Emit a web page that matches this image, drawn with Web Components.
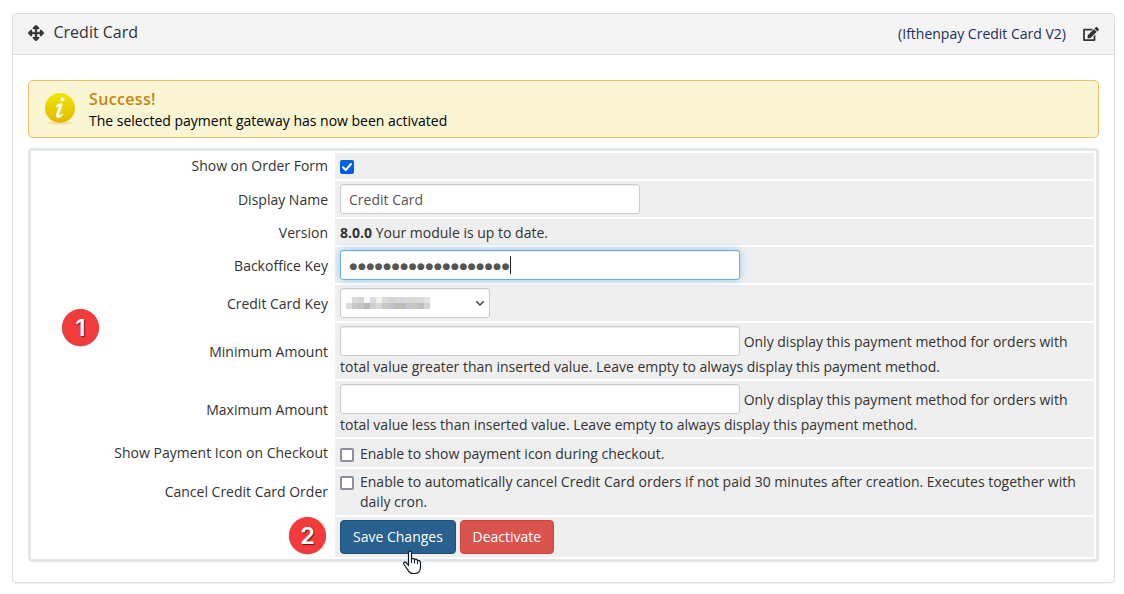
<!DOCTYPE html>
<html lang="en">
<head>
<meta charset="utf-8">
<title>Payment Gateways</title>
<style>
body{margin:0;background:#fff;width:1124px;height:594px;overflow:hidden;font:14px/20px "Open Sans",sans-serif;color:#333}
.low{--label-drop:2px}
</style>
</head>
<body>
<gateway-panel heading="Credit Card" module="(Ifthenpay Credit Card V2)">
  <success-alert heading="Success!">The selected payment gateway has now been activated</success-alert>
  <settings-table>
    <settings-row label="Show on Order Form" style="height:26px"><check-box checked></check-box></settings-row>
    <settings-row class="low" label="Display Name" style="height:36px"><text-field style="width:300px">Credit Card</text-field></settings-row>
    <settings-row class="low" label="Version" style="height:26px;--cell-top:4px"><b>8.0.0</b> Your module is up to date.</settings-row>
    <settings-row class="low" label="Backoffice Key" style="height:36px"><text-field focused>●●●●●●●●●●●●●●●●●●●</text-field></settings-row>
    <settings-row class="low" label="Credit Card Key" style="height:36px"><key-select></key-select></settings-row>
    <settings-row class="low" label="Minimum Amount" style="height:56px"><text-field></text-field> Only display this payment method for orders with total value greater than inserted value. Leave empty to always display this payment method.</settings-row>
    <settings-row class="low" label="Maximum Amount" style="height:56px"><text-field></text-field> Only display this payment method for orders with total value less than inserted value. Leave empty to always display this payment method.</settings-row>
    <settings-row label="Show Payment Icon on Checkout" style="height:28px;--cell-top:5px"><check-box>Enable to show payment icon during checkout.</check-box></settings-row>
    <settings-row label="Cancel Credit Card Order" style="height:46px"><check-box>Enable to automatically cancel Credit Card orders if not paid 30 minutes after creation. Executes together with daily cron.</check-box></settings-row>
    <settings-row label="" style="height:40px"><action-button>Save Changes</action-button> <action-button kind="danger">Deactivate</action-button></settings-row>
  </settings-table>
</gateway-panel>
<step-badge style="left:62px;top:309px">1</step-badge>
<step-badge style="left:289px;top:517px">2</step-badge>
<hand-pointer></hand-pointer>
<script>
function define(name, render){
  customElements.define(name, class extends HTMLElement{
    constructor(){super();this.attachShadow({mode:'open'})}
    connectedCallback(){this.shadowRoot.innerHTML=render(this)}
  });
}
define('gateway-panel', el=>`<style>
:host{display:block;box-sizing:border-box;margin:0 9px 0 12px;height:583px;padding-top:13px}
section{box-sizing:border-box;height:570px;border:1px solid #ddd;border-radius:4px;box-shadow:0 1px 1px rgba(0,0,0,.05)}
header{height:40px;background:#f4f4f4;border-bottom:1px solid #ddd;border-radius:3px 3px 0 0;display:flex;align-items:center;padding:0 15px}
h3{font-size:16px;font-weight:400;line-height:20px;margin:0 auto 4px 9.500px}
.m{color:#202f60;margin-right:17px;margin-bottom:1px}
.mv{margin-bottom:3px}
svg{display:block}
main{padding:25px 15px 0}
</style><section><header>
<svg class="mv" width="16" height="16" viewBox="0 0 512 512" fill="#333" stroke="#333" stroke-width="12"><path d="M352.201 425.775l-79.196 79.196c-9.373 9.373-24.568 9.373-33.941 0l-79.196-79.196c-15.119-15.119-4.411-40.971 16.971-40.970h51.162L228 284H127.196v51.162c0 21.382-25.851 32.090-40.971 16.971L7.029 272.937c-9.373-9.373-9.373-24.569 0-33.941L86.225 159.800c15.119-15.119 40.971-4.411 40.971 16.971V228H228V127.196h-51.230c-21.382 0-32.090-25.851-16.971-40.971l79.196-79.196c9.373-9.373 24.568-9.373 33.941 0l79.196 79.196c15.119 15.119 4.411 40.971-16.971 40.971h-51.162V228h100.804v-51.162c0-21.382 25.851-32.090 40.970-16.971l79.196 79.196c9.373 9.373 9.373 24.569 0 33.941L425.773 352.200c-15.119 15.119-40.971 4.411-40.970-16.971V284H284v100.804h51.230c21.382 0 32.090 25.851 16.971 40.971z"/></svg>
<h3>${el.getAttribute('heading')}</h3><span class="m">${el.getAttribute('module')}</span>
<svg width="16" height="14" viewBox="0 0 576 512" fill="#333"><path d="M402.600 83.200l90.200 90.200c3.800 3.800 3.800 10 0 13.800L274.400 405.600l-92.800 10.300c-12.400 1.400-22.900-9.100-21.500-21.500l10.300-92.800L388.800 83.200c3.800-3.800 10-3.800 13.800 0zm162-22.900l-48.800-48.800c-15.200-15.200-39.900-15.200-55.200 0l-35.400 35.400c-3.800 3.800-3.800 10 0 13.800l90.200 90.200c3.800 3.800 10 3.800 13.800 0l35.400-35.400c15.200-15.300 15.200-40 0-55.200zM384 346.200V448H64V128h229.800c3.200 0 6.200-1.300 8.500-3.500l40-40c7.600-7.600 2.200-20.500-8.500-20.500H48C21.500 64 0 85.500 0 112v352c0 26.500 21.500 48 48 48h352c26.500 0 48-21.500 48-48V306.200c0-10.700-12.900-16-20.500-8.500l-40 40c-2.200 2.300-3.500 5.300-3.500 8.500z"/></svg>
</header><main><slot></slot></main></section>`);
define('success-alert', el=>`<style>
:host{display:flex;box-sizing:border-box;height:58px;border:1px solid #e8c264;border-radius:5px;background:#faf5d3;color:#000;padding:8px 16px 0;margin-bottom:10px}
svg{margin:3px 13px 0 -1px}
strong{display:block;font-size:16px;line-height:20px;font-weight:650;letter-spacing:.35px;color:#c48612}
.b{line-height:22px;padding-top:1px}
</style>
<svg width="32" height="34" viewBox="0 0 32 34"><defs><linearGradient id="g" x2="0" y2="1"><stop offset="0" stop-color="#f0e800"/><stop offset=".5" stop-color="#e8cf00"/><stop offset="1" stop-color="#e2b802"/></linearGradient></defs><ellipse cx="16" cy="31" rx="13" ry="1.700" fill="#ecd9a0" opacity=".7"/><circle cx="16" cy="16" r="15" fill="url(#g)"/><circle cx="18.500" cy="7.500" r="2" fill="#fff"/><path d="M11.800 14.300C14 12.200 16.500 11 17.900 11.600C18.700 12 17.900 14.500 17.100 17C16.300 19.700 14.900 23 15.600 23.500C16.300 24 18 22.600 19 21.600L19.400 22.100C17.500 24.800 14.500 26.500 13 25.500C11.600 24.500 12.500 21.600 13.300 19.300C14 17.300 15.200 14.500 14.700 14.200C14.200 13.900 13 14.600 12.200 15.100Z" fill="#fff" stroke="#fff" stroke-width=".4"/></svg>
<div class="t"><strong>${el.getAttribute('heading')}</strong><div class="b"><slot></slot></div></div>`);
define('settings-table', el=>`<style>
:host{display:flex;flex-direction:column;gap:2px;box-sizing:border-box;height:414px;border:3px solid #e2e7e9;border-radius:4px;padding:2px}
</style><slot></slot>`);
define('settings-row', el=>`<style>
:host{display:grid;grid-template-columns:300px 759px;gap:2px}
.l{display:flex;align-items:center;justify-content:flex-end;padding:var(--label-drop,0) 5px 0 0}
.c{background:#efefef;box-sizing:border-box;padding:var(--cell-top,3px) 5px 0}
</style><div class="l">${el.getAttribute('label')}</div><div class="c"><slot></slot></div>`);
define('text-field', el=>`<style>
:host{display:inline-block;overflow:hidden;vertical-align:-10px;margin-bottom:1px;box-sizing:border-box;width:400px;height:30px;line-height:27px;background:#fff;border:1px solid #ccc;border-radius:3px;padding:1px 8px 0;color:#555;box-shadow:inset 0 1px 1px rgba(0,0,0,.075)}
:host([focused]){padding-left:8.500px;border-color:#66afe9;box-shadow:inset 0 1px 1px rgba(0,0,0,.075),0 0 8px rgba(102,175,233,.6);position:relative}
:host([focused]) span{display:inline-block;vertical-align:top;height:18px;margin-top:4px;font:9px/20px "DejaVu Sans",sans-serif;letter-spacing:.6px;border-right:1px solid #222}
</style><span><slot></slot></span>`);
define('check-box', el=>`<style>
:host{display:flex;gap:6px}
i{flex:none;box-sizing:border-box;width:14px;height:14px;margin-top:4px;border:2px solid #8f8f9d;border-radius:2px;background:#fff}
:host([checked]) i{border:0;background:#0060df}
svg{display:block}
</style><i>${el.hasAttribute('checked')?'<svg width="14" height="14" viewBox="0 0 14 14"><path d="M3 7.300 5.700 10 11 4" fill="none" stroke="#fff" stroke-width="2" stroke-linecap="round" stroke-linejoin="round"/></svg>':''}</i><span><slot></slot></span>`);
define('key-select', el=>{
  const rows=[['#fbfbf9','#dadadd','#d5d3d4','#fafaf7','#d8dbe1','#f4f0ec','#d9dbdd','#d7d4cf','#d7d8d9','#d8d7d8','#d5dad9','#d9d7cf','#dadadb','#e2e3e7'],
  ['#dfdad8','#c7c9cc','#c9c2c0','#b5b7b7','#cdd0cf','#dbd7d8','#c9c7c0','#c2c4cb','#bdbcbc','#bdbbbc','#c3c9ce','#ccc8bf','#bdc0c6','#d5d4d4']];
  return `<style>
:host{display:flex;align-items:center;justify-content:space-between;box-sizing:border-box;width:150px;height:30px;background:#fff;border:1px solid #ccc;border-radius:3px;padding:0 4px 0 5px;box-shadow:inset 0 1px 1px rgba(0,0,0,.075)}
</style><svg width="84" height="12" shape-rendering="crispEdges">${rows.map((r,y)=>r.map((c,x)=>`<rect x="${x*6}" y="${y*6}" width="6" height="6" fill="${c}"/>`).join('')).join('')}</svg>
<svg width="10" height="8" viewBox="0 0 10 8"><path d="M1.300 2.300 5 6 8.700 2.300" fill="none" stroke="#444" stroke-width="1.500"/></svg>`});
define('action-button', el=>`<style>
:host{display:inline-block;vertical-align:top;box-sizing:border-box;height:34px;padding:6px 12px;border:1px solid #204d74;border-radius:4px;background:#286090;color:#fff}
:host([kind=danger]){background:#d9534f;border-color:#d43f3a}
</style><slot></slot>`);
define('step-badge', el=>`<style>
:host{position:absolute;width:37px;height:37px;border-radius:50%;background:#f23b3b;box-shadow:0 .5px 1px rgba(0,0,0,.5);color:#fff;font:600 23.500px/37px Inter,sans-serif;text-align:center;text-shadow:1px 1px 1px rgba(0,0,0,.6)}
</style><slot></slot>`);
define('hand-pointer', el=>`<style>:host{position:absolute;left:403px;top:550px}svg{display:block}</style>
<svg width="19" height="25" viewBox="0 0 19 25"><path d="M5.500 15.500V3C5.500.4 8.500.4 8.500 3V9.500C9 7.800 11.500 8 11.500 10C12.200 8.500 14.500 9 14.500 11C15.500 10 17.500 10.600 17.500 12.500V17C17.500 21 15.500 23.500 11.500 23.500H10C7.500 23.500 6 22 4.800 19.900L1 14.500C-.3 12 2.500 11.200 4 13.300Z" fill="#fff" stroke="#111827" stroke-width="1.200" stroke-linejoin="round"/><path d="M8.500 9V13M11.500 10V13.500M14.500 11V14" stroke="#111827" stroke-width="1.100"/></svg>`);
</script>
</body>
</html>
